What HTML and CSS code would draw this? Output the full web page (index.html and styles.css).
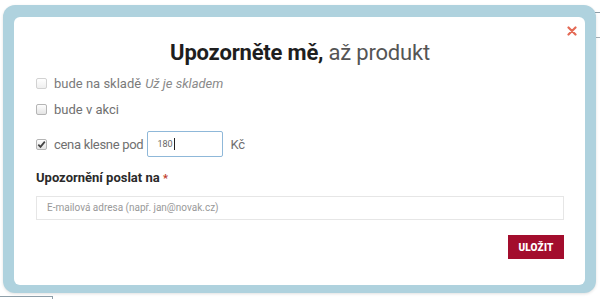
FILE: index.html
```html
<!DOCTYPE html>
<html lang="cs">
<head>
    <meta charset="UTF-8">
    <meta name="viewport" content="width=device-width, initial-scale=1.0">
    <link rel="stylesheet" href="styles.css">
    <title>Upozorněte mě</title>
</head>
<body>
    <div class="backdrop">
        <div class="bg-line bg-top"></div>
        <div class="bg-line bg-right"></div>
        <div class="bg-box"></div>
    </div>

    <div class="modal-frame">
        <div class="modal">
            <button class="close" type="button" aria-label="Zavřít">
                <svg width="10" height="10" viewBox="0 0 10 10">
                    <path d="M1.5 1.5 L8.5 8.5 M8.5 1.5 L1.5 8.5" stroke="#e46a55" stroke-width="2.2" stroke-linecap="round"/>
                </svg>
            </button>

            <h1 class="title"><strong>Upozorněte mě,</strong> až produkt</h1>

            <form class="watch-form">
                <label class="option disabled">
                    <span class="box"></span>
                    bude na skladě <em>Už je skladem</em>
                </label>

                <label class="option">
                    <span class="box"></span>
                    bude v akci
                </label>

                <label class="option price-row">
                    <span class="box checked">
                        <svg width="9" height="9" viewBox="0 0 9 9">
                            <path d="M1.3 4.6 L3.5 6.9 L7.8 1.6" stroke="#444" stroke-width="1.7" fill="none"/>
                        </svg>
                    </span>
                    <span class="price-text">cena klesne pod</span>
                    <span class="price-input">180<span class="caret"></span></span>
                    <span class="currency">Kč</span>
                </label>

                <div class="send-label">Upozornění poslat na <span class="req">*</span></div>

                <div class="email-input">E-mailová adresa (např. jan@novak.cz)</div>

                <div class="actions">
                    <button type="button" class="save">ULOŽIT</button>
                </div>
            </form>
        </div>
    </div>
</body>
</html>
```

FILE: styles.css
```css
body {
    margin: 0;
    padding: 0;
    font-family: Roboto, "Liberation Sans", sans-serif;
    background-color: #fff;
    width: 600px;
    height: 299px;
    overflow: hidden;
    position: relative;
}

/* page behind the popup */
.backdrop {
    position: absolute;
    inset: 0;
}

.bg-line {
    position: absolute;
    height: 1px;
    background-color: #8e9ea8;
}

.bg-top {
    left: 67px;
    right: 0;
    top: 12px;
}

.bg-right {
    left: 580px;
    right: 0;
    top: 37px;
    background-color: #a7b0b6;
}

.bg-box {
    position: absolute;
    left: -1px;
    top: 296px;
    width: 52px;
    height: 10px;
    border: 1px solid #8e9ea8;
}

/* popup */
.modal-frame {
    position: absolute;
    left: 3px;
    top: 5px;
    width: 571px;
    height: 268px;
    padding: 12px 11px 8px 11px;
    background-color: #afd2de;
    border-radius: 12px;
    box-shadow: 0 1px 3px rgba(0, 0, 0, 0.12);
}

.modal {
    position: relative;
    height: 100%;
    box-sizing: border-box;
    background-color: #fff;
    border-radius: 6px;
    padding: 23px 21px 0 22px;
}

.close {
    position: absolute;
    right: 7px;
    top: 8px;
    width: 12px;
    height: 12px;
    padding: 0;
    border: none;
    background: none;
    display: flex;
    align-items: center;
    justify-content: center;
    cursor: pointer;
}

.title {
    margin: 0 0 4px;
    font-size: 22px;
    line-height: 26px;
    font-weight: 400;
    text-align: center;
    color: #555;
    letter-spacing: -0.2px;
}

.title strong {
    color: #1e1e1e;
    font-weight: 700;
}

.watch-form {
    display: flex;
    flex-direction: column;
}

.option {
    display: flex;
    align-items: center;
    height: 26px;
    font-size: 13px;
    color: #707070;
    cursor: pointer;
}

.option em {
    color: #8a8a8a;
    margin-left: 4px;
}

.option.disabled {
    color: #7a7a7a;
}

.box {
    width: 9px;
    height: 9px;
    margin-right: 7px;
    border: 1px solid #b5b5b5;
    border-radius: 2px;
    background: linear-gradient(#fdfdfd, #e4e4e4);
    display: flex;
    align-items: center;
    justify-content: center;
}

.disabled .box {
    border-color: #d2d2d2;
    background: linear-gradient(#fff, #efefef);
}

.price-row {
    margin-top: 9px;
}

.price-text {
    letter-spacing: -0.3px;
}

.price-input {
    display: flex;
    align-items: center;
    width: 65px;
    height: 24px;
    margin-left: 4px;
    padding-left: 9px;
    border: 1px solid #8fb8d9;
    border-radius: 2px;
    font-size: 9px;
    color: #666;
}

.caret {
    width: 1px;
    height: 12px;
    background-color: #222;
    margin-left: 1px;
}

.currency {
    margin-left: 7px;
}

.send-label {
    margin-top: 12px;
    font-size: 13px;
    line-height: 18px;
    font-weight: 700;
    color: #2a2a2a;
}

.req {
    color: #c0392b;
    font-size: 11px;
}

.email-input {
    margin-top: 8px;
    height: 22px;
    line-height: 22px;
    padding-left: 10px;
    border: 1px solid #e6e6e6;
    font-size: 10px;
    color: #999;
}

.actions {
    display: flex;
    justify-content: flex-end;
    margin-top: 15px;
}

.save {
    width: 56px;
    height: 24px;
    padding: 0;
    border: none;
    background-color: #a30d2d;
    color: #fff;
    font-family: Roboto, "Liberation Sans", sans-serif;
    font-size: 10px;
    font-weight: 900;
    letter-spacing: 0.2px;
    cursor: pointer;
}
```
